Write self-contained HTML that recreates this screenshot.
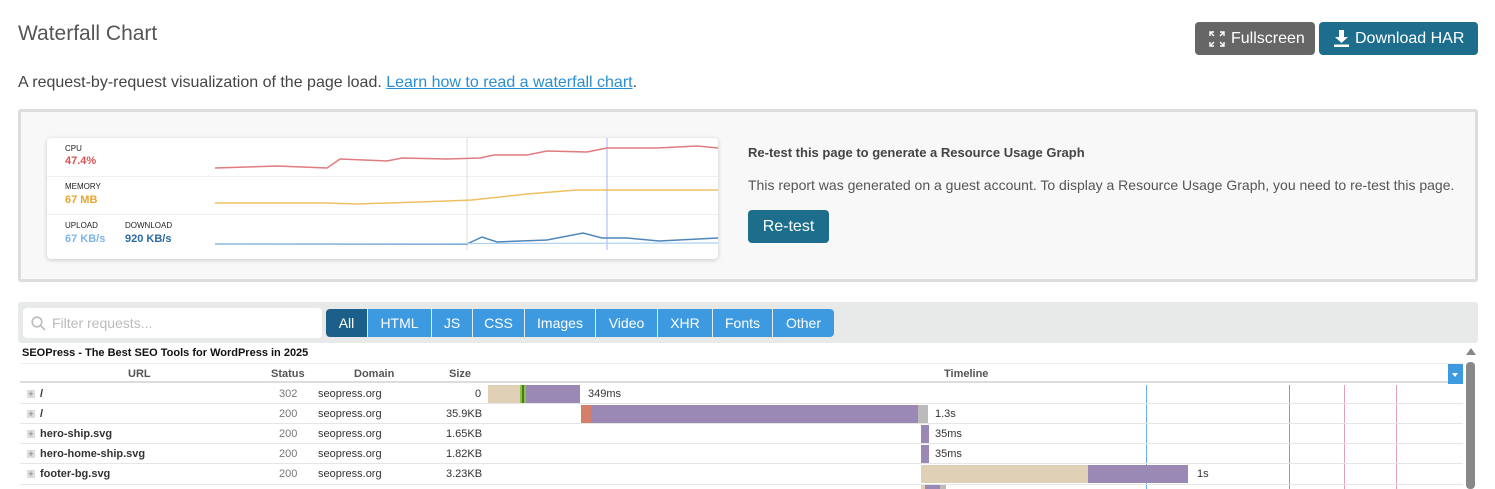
<!DOCTYPE html>
<html><head><style>
*{box-sizing:border-box;margin:0;padding:0}
body{width:1495px;height:489px;overflow:hidden;background:#fff;font-family:"Liberation Sans",sans-serif;color:#333;position:relative}
.a{position:absolute}
.btn{position:absolute;top:22px;height:33px;border-radius:4px;color:#fff;font-size:16px;line-height:33px;padding-left:36px}
.tab{position:absolute;top:309px;height:28px;background:#3d9ae0;color:#fff;font-size:14px;line-height:28px;text-align:center}
.row{position:absolute;left:20px;width:1443px;height:20px;border-bottom:1px solid #e6e6e6;font-size:11px;line-height:20px}
.row span{position:absolute}
.pl{position:absolute;left:7px;top:6px;width:8px;height:8px;background:#ddd;font-size:9px;line-height:8px;text-align:center;color:#777}
.b{position:absolute;top:1px;height:18px}
.sm{font-size:8px;color:#222}
.v{font-size:11px;font-weight:bold}
</style></head><body>
<div class="a" style="left:18px;top:22px;font-size:21px;color:#555">Waterfall Chart</div>
<div class="btn" style="left:1195px;width:120px;background:#666">
<svg class="a" style="left:14px;top:9px" width="16" height="16" viewBox="0 0 16 16" stroke="#fff" stroke-width="1.4" fill="none"><path d="M1 5V1h4M1 1l4 4M11 1h4v4M15 1l-4 4M1 11v4h4M1 15l4-4M15 11v4h-4M15 15l-4-4"/></svg>Fullscreen</div>
<div class="btn" style="left:1319px;width:159px;background:#1d6e8c">
<svg class="a" style="left:15px;top:8px" width="15" height="17" viewBox="0 0 15 17" fill="#fff"><path d="M5 0h5v7h4l-6.5 6L1 7h4z"/><rect x="0" y="14.5" width="15" height="2.5"/></svg>Download HAR</div>
<div class="a" style="left:18px;top:74px;font-size:16px;color:#444">A request-by-request visualization of the page load. <span style="color:#2a8fd6;text-decoration:underline">Learn how to read a waterfall chart</span>.</div>
<div class="a" style="left:18px;top:109px;width:1460px;height:173px;border:3px solid #ddd;background:#f8f8f8;border-radius:3px"></div>
<div class="a" style="left:47px;top:138px;width:671px;height:121px;background:#fff;border-radius:4px;box-shadow:0 1px 5px rgba(0,0,0,.2)">
<div class="a sm" style="left:18px;top:6px">CPU</div><div class="a v" style="left:18px;top:17px;color:#d9534f">47.4%</div>
<div class="a sm" style="left:18px;top:44px">MEMORY</div><div class="a v" style="left:18px;top:56px;color:#e8a630">67 MB</div>
<div class="a sm" style="left:18px;top:83px">UPLOAD</div><div class="a v" style="left:18px;top:95px;color:#7cb5e8">67 KB/s</div>
<div class="a sm" style="left:78px;top:83px">DOWNLOAD</div><div class="a v" style="left:78px;top:95px;color:#2e6a9e">920 KB/s</div>
<div class="a" style="left:0;top:38px;width:671px;height:1px;background:#f0f0f0"></div>
<div class="a" style="left:0;top:76px;width:671px;height:1px;background:#f0f0f0"></div>
<svg class="a" style="left:0;top:0" width="671" height="121">
<line x1="420" y1="0" x2="420" y2="112" stroke="#ddd"/><line x1="560" y1="0" x2="560" y2="112" stroke="#aab0ff"/>
<path d="M168 30L230 28 280 30 293 21 340 23 355 20 400 21 433 20 447 17 480 17 500 13 540 14 560 10 610 10 650 8 671 10" stroke="#e07b80" stroke-width="1.5" fill="none"/>
<path d="M168 65L280 65 310 66 400 63 425 62 480 56 530 52 671 52" stroke="#efc060" stroke-width="1.5" fill="none"/>
<path d="M168 106L420 106 435 99 450 104 500 102 536 95 555 100 580 100 612 103 671 100" stroke="#4f86b8" stroke-width="1.5" fill="none"/>
<path d="M168 106L671 105" stroke="#a9d0f0" stroke-width="1.2" fill="none"/>
</svg></div>
<div class="a" style="left:748px;top:145px;font-size:13px;font-weight:bold;color:#444">Re-test this page to generate a Resource Usage Graph</div>
<div class="a" style="left:748px;top:177px;font-size:14px;color:#555">This report was generated on a guest account. To display a Resource Usage Graph, you need to re-test this page.</div>
<div class="a" style="left:748px;top:210px;width:81px;height:33px;background:#1d6e8c;border-radius:4px;color:#fff;font-size:16px;line-height:33px;text-align:center">Re-test</div>
<div class="a" style="left:18px;top:302px;width:1460px;height:41px;background:#e8e9e9;border-radius:3px"></div>
<div class="a" style="left:23px;top:308px;width:299px;height:30px;background:#fff;border-radius:4px;color:#bbb;font-size:14px;line-height:30px;padding-left:29px">
<svg class="a" style="left:8px;top:8px" width="15" height="15" viewBox="0 0 15 15" stroke="#bbb" stroke-width="1.6" fill="none"><circle cx="6" cy="6" r="4.8"/><path d="M9.5 9.5L14 14"/></svg>Filter requests...</div>
<div class="tab" style="left:326px;width:41px;background:#1b5f8a;border-radius:4px 0 0 4px">All</div>
<div class="tab" style="left:368px;width:63px">HTML</div>
<div class="tab" style="left:432px;width:40px">JS</div>
<div class="tab" style="left:473px;width:51px">CSS</div>
<div class="tab" style="left:525px;width:70px">Images</div>
<div class="tab" style="left:596px;width:61px">Video</div>
<div class="tab" style="left:658px;width:54px">XHR</div>
<div class="tab" style="left:713px;width:59px">Fonts</div>
<div class="tab" style="left:773px;width:61px;border-radius:0 4px 4px 0">Other</div>
<div class="a" style="left:22px;top:347px;font-size:11px;font-weight:bold;color:#111">SEOPress - The Best SEO Tools for WordPress in 2025</div>
<div class="a" style="left:1466px;top:348px;width:0;height:0;border-left:5px solid transparent;border-right:5px solid transparent;border-bottom:7px solid #888"></div>
<div class="a" style="left:1466px;top:362px;width:9px;height:127px;background:#888;border-radius:4px"></div>
<div class="row" style="top:363px;border-top:1px solid #eee;border-bottom:2px solid #ddd;font-weight:bold;color:#555">
<span style="left:108px">URL</span><span style="left:251px">Status</span><span style="left:334px">Domain</span><span style="left:429px">Size</span><span style="left:924px">Timeline</span>
<div class="a" style="left:1428px;top:0;width:15px;height:20px;background:#3d9ae0"><div class="a" style="left:4px;top:9px;border-left:3.5px solid transparent;border-right:3.5px solid transparent;border-top:4px solid #fff"></div></div></div>
<div class="a" style="left:1146px;top:385px;width:1px;height:104px;background:#6aaef0"></div>
<div class="a" style="left:1289px;top:385px;width:1px;height:104px;background:#7a9ee0"></div>
<div class="a" style="left:1344px;top:385px;width:1px;height:104px;background:#e0a0bb"></div>
<div class="a" style="left:1396px;top:385px;width:1px;height:104px;background:#e0a0bb"></div>
<div class="row" style="top:384px"><div class="pl">+</div><span style="left:20px;font-weight:bold">/</span><span style="left:259px;color:#777">302</span><span style="left:298px">seopress.org</span><span style="left:455px">0</span>
<div class="b" style="left:468px;width:32px;background:#e0d0b5"></div><div class="b" style="left:500px;width:6px;background:#8bc34a"></div><div class="b" style="left:502px;width:2px;background:#4a7a10"></div><div class="b" style="left:506px;width:54px;background:#9a89b5"></div><span style="left:568px">349ms</span></div>
<div class="row" style="top:404px"><div class="pl">+</div><span style="left:20px;font-weight:bold">/</span><span style="left:259px;color:#777">200</span><span style="left:298px">seopress.org</span><span style="left:426px">35.9KB</span>
<div class="b" style="left:561px;width:10px;background:#d47f6a"></div><div class="b" style="left:571px;width:327px;background:#9a89b5"></div><div class="b" style="left:898px;width:10px;background:#bbb"></div><span style="left:915px">1.3s</span></div>
<div class="row" style="top:424px"><div class="pl">+</div><span style="left:20px;font-weight:bold">hero-ship.svg</span><span style="left:259px;color:#777">200</span><span style="left:298px">seopress.org</span><span style="left:426px">1.65KB</span>
<div class="b" style="left:901px;width:8px;background:#9a89b5"></div><span style="left:915px">35ms</span></div>
<div class="row" style="top:444px"><div class="pl">+</div><span style="left:20px;font-weight:bold">hero-home-ship.svg</span><span style="left:259px;color:#777">200</span><span style="left:298px">seopress.org</span><span style="left:426px">1.82KB</span>
<div class="b" style="left:901px;width:8px;background:#9a89b5"></div><span style="left:915px">35ms</span></div>
<div class="row" style="top:464px;height:21px"><div class="pl">+</div><span style="left:20px;font-weight:bold">footer-bg.svg</span><span style="left:259px;color:#777">200</span><span style="left:298px">seopress.org</span><span style="left:426px">3.23KB</span>
<div class="b" style="left:901px;width:167px;background:#e0d0b5"></div><div class="b" style="left:1068px;width:100px;background:#9a89b5"></div><span style="left:1177px">1s</span></div>
<div class="a" style="left:921px;top:485px;width:4px;height:4px;background:#e0d0b5"></div><div class="a" style="left:925px;top:485px;width:15px;height:4px;background:#9a89b5"></div><div class="a" style="left:940px;top:485px;width:6px;height:4px;background:#bbb"></div>
</body></html>
